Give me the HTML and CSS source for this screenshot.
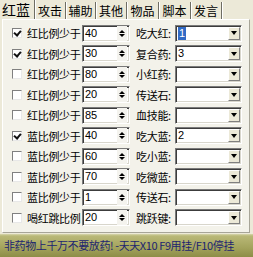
FILE: index.html
```html
<!DOCTYPE html>
<html>
<head>
<meta charset="utf-8">
<link rel="stylesheet" href="styles.css">
</head>
<body>
<div class="win">
  <div class="tabs">
    <div class="tab sel">红蓝</div>
    <div class="tab">攻击</div>
    <div class="tab">辅助</div>
    <div class="tab">其他</div>
    <div class="tab">物品</div>
    <div class="tab">脚本</div>
    <div class="tab">发言</div>
  </div>
  <div class="panel">
    <div class="row"><span class="cb on"></span><span class="lbl">红比例少于</span><span class="spin"><span class="val">40</span><span class="arr"><i class="up"></i><i class="dn"></i></span></span><span class="rl">吃大红:</span><span class="combo"><span class="cv"><b class="hl">1</b></span><span class="btn"><i class="dn"></i></span></span></div>
    <div class="row"><span class="cb on"></span><span class="lbl">红比例少于</span><span class="spin"><span class="val">30</span><span class="arr"><i class="up"></i><i class="dn"></i></span></span><span class="rl">复合药:</span><span class="combo"><span class="cv">3</span><span class="btn"><i class="dn"></i></span></span></div>
    <div class="row"><span class="cb"></span><span class="lbl">红比例少于</span><span class="spin"><span class="val">80</span><span class="arr"><i class="up"></i><i class="dn"></i></span></span><span class="rl">小红药:</span><span class="combo"><span class="cv"></span><span class="btn"><i class="dn"></i></span></span></div>
    <div class="row"><span class="cb"></span><span class="lbl">红比例少于</span><span class="spin"><span class="val">20</span><span class="arr"><i class="up"></i><i class="dn"></i></span></span><span class="rl">传送石:</span><span class="combo"><span class="cv"></span><span class="btn"><i class="dn"></i></span></span></div>
    <div class="row"><span class="cb"></span><span class="lbl">红比例少于</span><span class="spin"><span class="val">85</span><span class="arr"><i class="up"></i><i class="dn"></i></span></span><span class="rl">血技能:</span><span class="combo"><span class="cv"></span><span class="btn"><i class="dn"></i></span></span></div>
    <div class="row"><span class="cb on"></span><span class="lbl">蓝比例少于</span><span class="spin"><span class="val">40</span><span class="arr"><i class="up"></i><i class="dn"></i></span></span><span class="rl">吃大蓝:</span><span class="combo"><span class="cv">2</span><span class="btn"><i class="dn"></i></span></span></div>
    <div class="row"><span class="cb"></span><span class="lbl">蓝比例少于</span><span class="spin"><span class="val">60</span><span class="arr"><i class="up"></i><i class="dn"></i></span></span><span class="rl">吃小蓝:</span><span class="combo"><span class="cv"></span><span class="btn"><i class="dn"></i></span></span></div>
    <div class="row"><span class="cb"></span><span class="lbl">蓝比例少于</span><span class="spin"><span class="val">70</span><span class="arr"><i class="up"></i><i class="dn"></i></span></span><span class="rl">吃微蓝:</span><span class="combo"><span class="cv"></span><span class="btn"><i class="dn"></i></span></span></div>
    <div class="row"><span class="cb"></span><span class="lbl">蓝比例少于</span><span class="spin"><span class="val">1</span><span class="arr"><i class="up"></i><i class="dn"></i></span></span><span class="rl">传送石:</span><span class="combo"><span class="cv"></span><span class="btn"><i class="dn"></i></span></span></div>
    <div class="row"><span class="cb"></span><span class="lbl">喝红跳比例</span><span class="spin"><span class="val">20</span><span class="arr"><i class="up"></i><i class="dn"></i></span></span><span class="rl">跳跃键:</span><span class="combo"><span class="cv"></span><span class="btn"><i class="dn"></i></span></span></div>
  </div>
  <div class="foot">非药物上千万不要放药! -天天X10 F9用挂/F10停挂</div>
</div>
</body>
</html>
```
FILE: styles.css
```css
* { box-sizing: border-box; }
html, body { margin: 0; padding: 0; }
body {
  width: 253px; height: 257px; overflow: hidden;
  background: #ece9d8;
  font-family: "Noto Sans CJK SC", "Liberation Sans", sans-serif;
  font-size: 11px; color: #000;
}
.win { display: flex; flex-direction: column; height: 257px; }
.tabs { display: flex; height: 19px; padding-left: 2px; align-items: stretch; }
.tab {
  width: 31px; font-size: 12px; line-height: 17px; text-align: center;
  border-right: 1px solid #6e6d63; box-shadow: 1px 0 0 #fff;
  margin-top: 2px; padding-top: 0;
}
.tab.sel { width: 33px; font-size: 14px; text-align: left; padding-left: 0; margin-top: 0; line-height: 19px; }
.tab:nth-child(3) { width: 30px; }
.tab:nth-child(4) { width: 31px; }
.tab:nth-child(5), .tab:nth-child(6) { width: 32px; }
.panel {
  margin: 0 3px 0 2px; height: 214px;
  background: #f3f2ea;
  border-top: 1px solid #fff; border-left: 1px solid #fff;
  border-right: 1px solid #a7a598; border-bottom: 1px solid #a7a598;
  padding: 3px 0 0 9px;
  display: grid; grid-auto-rows: 20.5px;
}
.row { display: flex; align-items: center; }
.cb {
  width: 10px; height: 10px; background: #fff; flex: none;
  border-top: 1px solid #808080; border-left: 1px solid #808080;
  border-right: 1px solid #e8e8e8; border-bottom: 1px solid #e8e8e8;
  position: relative;
}
.cb.on::after {
  content: ""; position: absolute; left: 1px; top: 0px; width: 5px; height: 3px;
  border-left: 2px solid #111; border-bottom: 2px solid #111;
  transform: rotate(-50deg); transform-origin: center;
  top: 1px;
}
.lbl { margin-left: 5px; width: 55px; white-space: nowrap; letter-spacing: -0.3px; }
.spin, .combo {
  height: 17px; background: #fff; display: flex; align-items: stretch;
  border-top: 1px solid #7a7a7a; border-left: 1px solid #7a7a7a;
  border-right: 1px solid #fff; border-bottom: 1px solid #fff;
  box-shadow: inset 1px 1px 0 #3c3c3c, inset -1px -1px 0 #d8d6cc;
}
.spin { width: 48px; }
.val { flex: 1; padding-left: 2px; line-height: 15px; font-family: "Liberation Sans", sans-serif; font-size: 11px; }
.arr { width: 10px; display: flex; flex-direction: column; justify-content: center; align-items: center; gap: 1px; margin-right: 2px; background: #f4f3ee; }
i.up { width: 0; height: 0; border-left: 3px solid transparent; border-right: 3px solid transparent; border-bottom: 3px solid #000; }
i.dn { width: 0; height: 0; border-left: 3px solid transparent; border-right: 3px solid transparent; border-top: 3px solid #000; }
.rl { margin-left: 6px; width: 39px; white-space: nowrap; letter-spacing: -0.3px; }
.combo { width: 67px; }
.cv { flex: 1; padding: 1px 2px; line-height: 13px; font-family: "Liberation Sans", sans-serif; font-size: 11px; }
.hl { font-weight: normal; background: #316ac5; color: #fff; padding: 0 1px; display: inline-block; line-height: 13px; }
.btn {
  width: 12px; margin: 1px 1px 1px 0; background: #ece9d8; display: flex; align-items: center; justify-content: center;
  border-top: 1px solid #fff; border-left: 1px solid #fff; border-right: 1px solid #808080; border-bottom: 1px solid #808080;
}
.btn i.dn { border-left-width: 3.5px; border-right-width: 3.5px; border-top-width: 4px; }
.foot {
  flex: 1; margin-top: 1px;
  background: linear-gradient(#d7d6ad 0, #b9b877 2px, #a3a35c 60%, #8d8d47 100%);
  color: #1c2470; font-size: 11px; line-height: 23px; padding-left: 4px; white-space: nowrap; letter-spacing: -0.4px;
}
```
